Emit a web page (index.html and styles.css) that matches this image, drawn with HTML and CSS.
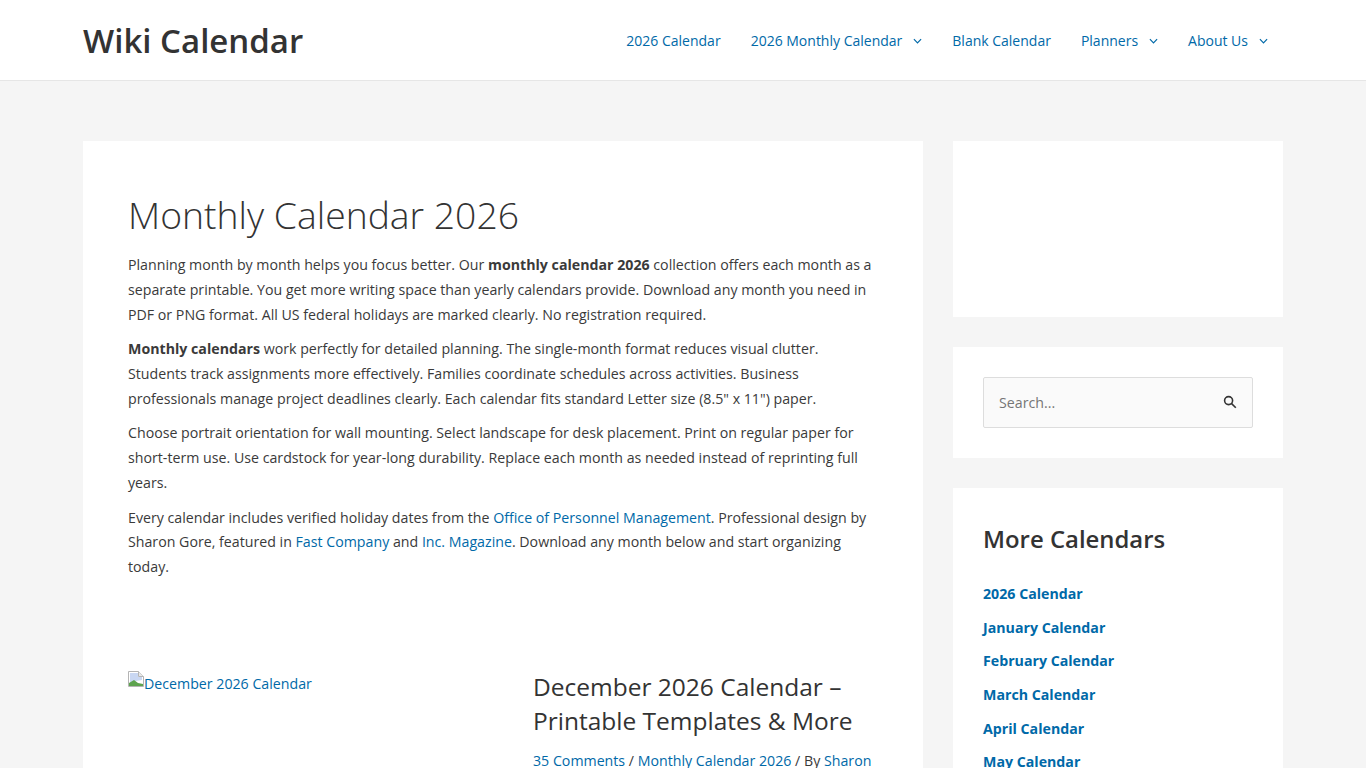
FILE: index.html
```html
<!DOCTYPE html>
<html>
<head>
    <meta charset="utf-8">
    <title>Monthly Calendar 2026 - Wiki Calendar</title>
    <link rel="stylesheet" href="styles.css">
</head>
<body>
    <header class="site-header">
        <div class="header-inner">
            <a class="site-title" href="#">Wiki Calendar</a>
            <nav class="main-nav">
                <a href="#">2026 Calendar</a>
                <a href="#">2026 Monthly Calendar <svg class="caret" viewBox="0 0 10 6"><path d="M1 1l4 4 4-4"/></svg></a>
                <a href="#">Blank Calendar</a>
                <a href="#">Planners <svg class="caret" viewBox="0 0 10 6"><path d="M1 1l4 4 4-4"/></svg></a>
                <a href="#">About Us <svg class="caret" viewBox="0 0 10 6"><path d="M1 1l4 4 4-4"/></svg></a>
            </nav>
        </div>
    </header>

    <div class="page">
        <main class="content">
            <h1>Monthly Calendar 2026</h1>
            <p>Planning month by month helps you focus better. Our <strong>monthly calendar 2026</strong> collection offers each month as a separate printable. You get more writing space than yearly calendars provide. Download any month you need in PDF or PNG format. All US federal holidays are marked clearly. No registration required.</p>
            <p><strong>Monthly calendars</strong> work perfectly for detailed planning. The single-month format reduces visual clutter. Students track assignments more effectively. Families coordinate schedules across activities. Business professionals manage project deadlines clearly. Each calendar fits standard Letter size (8.5" x 11") paper.</p>
            <p>Choose portrait orientation for wall mounting. Select landscape for desk placement. Print on regular paper for short-term use. Use cardstock for year-long durability. Replace each month as needed instead of reprinting full years.</p>
            <p>Every calendar includes verified holiday dates from the <a href="#">Office of Personnel Management</a>. Professional design by Sharon Gore, featured in <a href="#">Fast Company</a> and <a href="#">Inc. Magazine</a>. Download any month below and start organizing today.</p>

            <article class="post">
                <a class="post-thumb" href="#">
                    <svg class="broken-img" viewBox="0 0 16 16">
                        <path d="M.5 .5h10l5 5v10H.5z" fill="#fff" stroke="#b4b4b4"/>
                        <path d="M10.5 .5v5h5" fill="#e8e8e8" stroke="#b4b4b4"/>
                        <path d="M2 2h8v4h4v3l-6 1-6 2z" fill="#c9d7f2"/>
                        <path d="M1 15v-3l5-3 4 3 5 1v2z" fill="#5da34f"/>
                    </svg>December 2026 Calendar
                </a>
                <div class="post-body">
                    <h2><a href="#">December 2026 Calendar – Printable Templates &amp; More</a></h2>
                    <div class="post-meta"><a href="#">35 Comments</a> / <a href="#">Monthly Calendar 2026</a> / By <a href="#">Sharon</a></div>
                </div>
            </article>
        </main>

        <aside class="sidebar">
            <div class="widget ad-box"></div>
            <div class="widget search-box">
                <form class="search-form">
                    <input class="search-input" type="text" placeholder="Search...">
                    <svg class="search-icon" viewBox="0 0 14 14"><circle cx="5.6" cy="5.6" r="4"/><path d="M8.6 8.6l4.2 4.2"/></svg>
                </form>
            </div>
            <div class="widget">
                <h2 class="widget-title">More Calendars</h2>
                <ul class="widget-links">
                    <li><a href="#">2026 Calendar</a></li>
                    <li><a href="#">January Calendar</a></li>
                    <li><a href="#">February Calendar</a></li>
                    <li><a href="#">March Calendar</a></li>
                    <li><a href="#">April Calendar</a></li>
                    <li><a href="#">May Calendar</a></li>
                </ul>
            </div>
        </aside>
    </div>
</body>
</html>
```

FILE: styles.css
```css
html, body {
    height: 768px;
    overflow: hidden;
}
body {
    margin: 0;
    background: #f5f5f5;
    font-family: 'Open Sans', sans-serif;
    font-size: 14.2px;
    line-height: 24.7px;
    color: #3a3a3a;
}
a {
    color: #0069a8;
    text-decoration: none;
}
.site-header {
    background: #fff;
    border-bottom: 1px solid #e6e6e6;
}
.header-inner {
    display: flex;
    align-items: center;
    justify-content: space-between;
    height: 80px;
    padding: 2px 83px 0;
    box-sizing: border-box;
}
.site-title {
    font-size: 33px;
    font-weight: 600;
    line-height: 1.2;
    color: #333;
}
.main-nav {
    display: flex;
    gap: 30px;
    padding-right: 15px;
    font-size: 14px;
}
.main-nav a {
    display: flex;
    align-items: center;
    gap: 11px;
}
.caret {
    width: 9px;
    height: 6px;
    fill: none;
    stroke: #0069a8;
    stroke-width: 1.3;
}
.page {
    display: flex;
    align-items: flex-start;
    gap: 30px;
    padding: 60px 83px 0;
}
.content {
    width: 750px;
    padding: 45px 45px 0;
    background: #fff;
}
h1 {
    margin: 7px 0 15.5px;
    font-size: 37.3px;
    font-weight: 300;
    line-height: 1.2;
    color: #333;
}
p {
    margin: 0 0 10px;
}
.post {
    display: flex;
    gap: 45px;
    margin-top: 90.5px;
}
.post-thumb {
    width: 360px;
    flex-shrink: 0;
    padding-top: 1px;
}
.broken-img {
    width: 16px;
    height: 16px;
    vertical-align: 2px;
}
.post-body h2 {
    margin: 0 0 11px;
    font-size: 24.5px;
    font-weight: 400;
    line-height: 34px;
}
.post-body h2 a {
    color: #333;
}
.sidebar {
    width: 330px;
    display: flex;
    flex-direction: column;
    gap: 30px;
}
.widget {
    padding: 30px;
    background: #fff;
}
.ad-box {
    height: 116px;
}
.search-form {
    position: relative;
}
.search-input {
    box-sizing: border-box;
    width: 100%;
    height: 51px;
    padding: 0 15px;
    background: #fafafa;
    border: 1px solid #ddd;
    border-radius: 2px;
    font-family: inherit;
    font-size: 14.2px;
    color: #3a3a3a;
}
.search-icon {
    position: absolute;
    top: 18px;
    right: 16px;
    width: 14px;
    height: 14px;
    fill: none;
    stroke: #333;
    stroke-width: 1.6;
}
.widget-title {
    margin: 4px 0 26.5px;
    font-size: 23.9px;
    font-weight: 600;
    line-height: 1.4;
    color: #333;
}
.widget-links {
    margin: 0;
    padding: 0;
    list-style: none;
}
.widget-links li {
    margin-bottom: 9px;
}
.widget-links a {
    font-weight: 700;
}
```
